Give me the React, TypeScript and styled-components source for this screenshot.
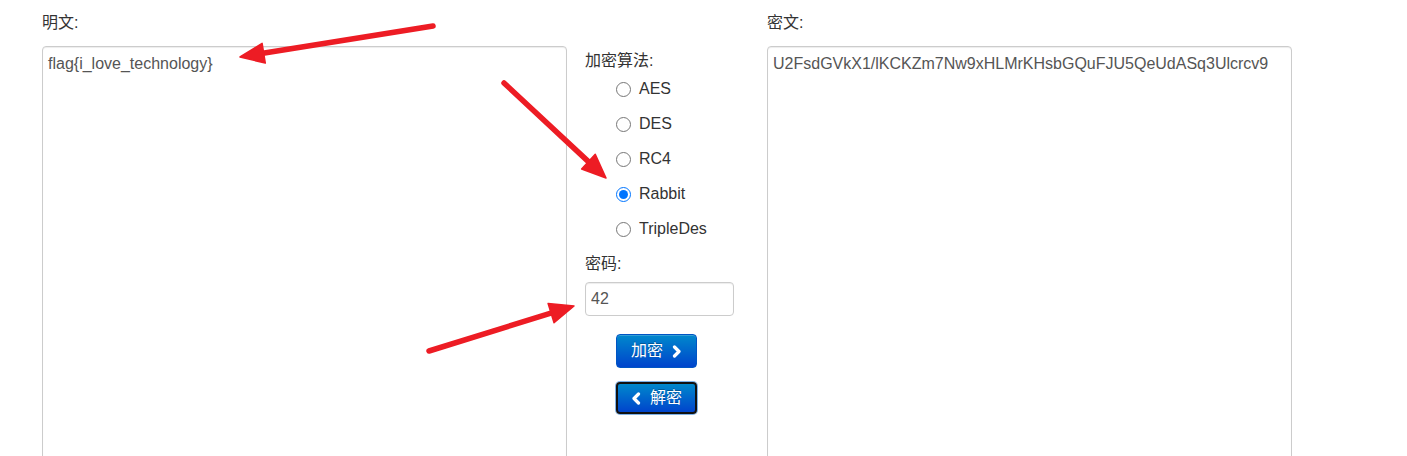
import React, { useState } from 'react';
import styled, { createGlobalStyle } from "styled-components";

const GlobalStyle = createGlobalStyle`
    body {
        margin: 0;
        background: #fff;
        font-family: "Liberation Sans", Arial, "Noto Sans CJK SC", sans-serif;
        font-size: 16px;
        line-height: 20px;
        color: #333;
    }
`

const algorithms = ['AES', 'DES', 'RC4', 'Rabbit', 'TripleDes'];

export default function App() {
    const [algo, setAlgo] = useState('Rabbit');

    return (
        <Page>
            <GlobalStyle/>
            <Row>
                <TextColumn>
                    <Label>明文:</Label>
                    <BigArea defaultValue="flag{i_love_technology}"/>
                </TextColumn>

                <Controls>
                    <Label>加密算法:</Label>
                    <RadioList>
                        {algorithms.map(a => (
                            <RadioRow key={a}>
                                <Radio type="radio" name="algo" checked={algo === a} onChange={() => setAlgo(a)}/>
                                {a}
                            </RadioRow>
                        ))}
                    </RadioList>
                    <KeyLabel>密码:</KeyLabel>
                    <KeyInput defaultValue="42"/>
                    <Buttons>
                        <Btn>
                            加密
                            <Chevron dir="right"/>
                        </Btn>
                        <Btn focused>
                            <Chevron dir="left"/>
                            解密
                        </Btn>
                    </Buttons>
                </Controls>

                <TextColumn>
                    <Label>密文:</Label>
                    <BigArea defaultValue="U2FsdGVkX1/lKCKZm7Nw9xHLMrKHsbGQuFJU5QeUdASq3Ulcrcv9"/>
                </TextColumn>
            </Row>

            {/* red annotation arrows drawn over the form */}
            <Annotations width="1407" height="456" viewBox="0 0 1407 456">
                <Arrow x1={433} y1={26} x2={240} y2={57}/>
                <Arrow x1={504} y1={83} x2={606} y2={178}/>
                <Arrow x1={429} y1={351} x2={574} y2={306}/>
            </Annotations>
        </Page>
    );
}

const Chevron = ({dir}: { dir: 'left' | 'right' }) => (
    <ChevronSvg width="10" height="13" viewBox="0 0 10 13">
        <path d={dir === 'right' ? 'M2.5 2 L7 6.5 L2.5 11' : 'M7.5 2 L3 6.5 L7.5 11'}
              fill="none" stroke="#fff" strokeWidth="3.2" strokeLinecap="round" strokeLinejoin="round"/>
    </ChevronSvg>
);

const Arrow = ({x1, y1, x2, y2}: { x1: number, y1: number, x2: number, y2: number }) => {
    const ang = Math.atan2(y2 - y1, x2 - x1);
    const len = 24;
    const half = 10;
    const bx = x2 - len * Math.cos(ang);
    const by = y2 - len * Math.sin(ang);
    const px = -Math.sin(ang) * half;
    const py = Math.cos(ang) * half;
    const sx = x2 - (len - 4) * Math.cos(ang);
    const sy = y2 - (len - 4) * Math.sin(ang);
    return (
        <g>
            <line x1={x1} y1={y1} x2={sx} y2={sy} stroke="#ed1c24" strokeWidth="5.5" strokeLinecap="round"/>
            <polygon points={`${x2},${y2} ${bx + px},${by + py} ${bx - px},${by - py}`} fill="#ed1c24"
                     stroke="#ed1c24" strokeWidth="1.5" strokeLinejoin="round"/>
        </g>
    );
};

const Page = styled.div`
    position: relative;
    width: 1407px;
    height: 456px;
    overflow: hidden;
`

const Row = styled.div`
    display: flex;
    padding: 13px 0 0 42px;
`

const TextColumn = styled.div`
    display: flex;
    flex-direction: column;
    width: 525px;
`

const Label = styled.div`
    height: 20px;
    color: #333;
`

const BigArea = styled.textarea`
    margin-top: 13px;
    box-sizing: border-box;
    width: 525px;
    height: 430px;
    padding: 7px 5px;
    border: 1px solid #ccc;
    border-radius: 4px;
    box-shadow: inset 0 1px 1px rgba(0, 0, 0, 0.075);
    font: inherit;
    color: #555;
    resize: none;
    outline: none;
`

const Controls = styled.div`
    display: flex;
    flex-direction: column;
    width: 182px;
    margin-left: 18px;
    padding-top: 38px;
`

const RadioList = styled.div`
    display: flex;
    flex-direction: column;
    gap: 15px;
    margin-top: 8px;
`

const RadioRow = styled.label`
    display: flex;
    align-items: center;
    gap: 8px;
    height: 20px;
    padding-left: 31px;
    color: #333;
`

const Radio = styled.input`
    margin: 0;
    width: 15px;
    height: 15px;
`

const KeyLabel = styled(Label)`
    margin-top: 15px;
`

const KeyInput = styled.input`
    margin-top: 8px;
    box-sizing: border-box;
    width: 149px;
    height: 34px;
    padding: 4px 5px;
    border: 1px solid #ccc;
    border-radius: 4px;
    box-shadow: inset 0 1px 1px rgba(0, 0, 0, 0.075);
    font: inherit;
    color: #555;
    outline: none;
`

const Buttons = styled.div`
    display: flex;
    flex-direction: column;
    gap: 14px;
    margin-top: 18px;
    padding-left: 31px;
`

const Btn = styled.button<{ focused?: boolean }>`
    display: flex;
    align-items: center;
    justify-content: center;
    gap: 9px;
    box-sizing: border-box;
    width: 81px;
    height: ${p => p.focused ? '32px' : '34px'};
    padding: 0;
    border: ${p => p.focused ? '2px solid #111' : '1px solid #0055c4'};
    border-radius: 4px;
    background: linear-gradient(to bottom, #0088cc, #0044cc);
    color: #fff;
    font: inherit;
    font-size: 16px;
    text-shadow: 0 -1px 0 rgba(0, 0, 0, 0.25);
    box-shadow: ${p => p.focused ? '0 0 0 1px #7fb2e8' : 'inset 0 1px 0 rgba(255,255,255,.2)'};
    cursor: pointer;
`

const ChevronSvg = styled.svg`
    display: block;
`

const Annotations = styled.svg`
    position: absolute;
    left: 0;
    top: 0;
    pointer-events: none;
`
